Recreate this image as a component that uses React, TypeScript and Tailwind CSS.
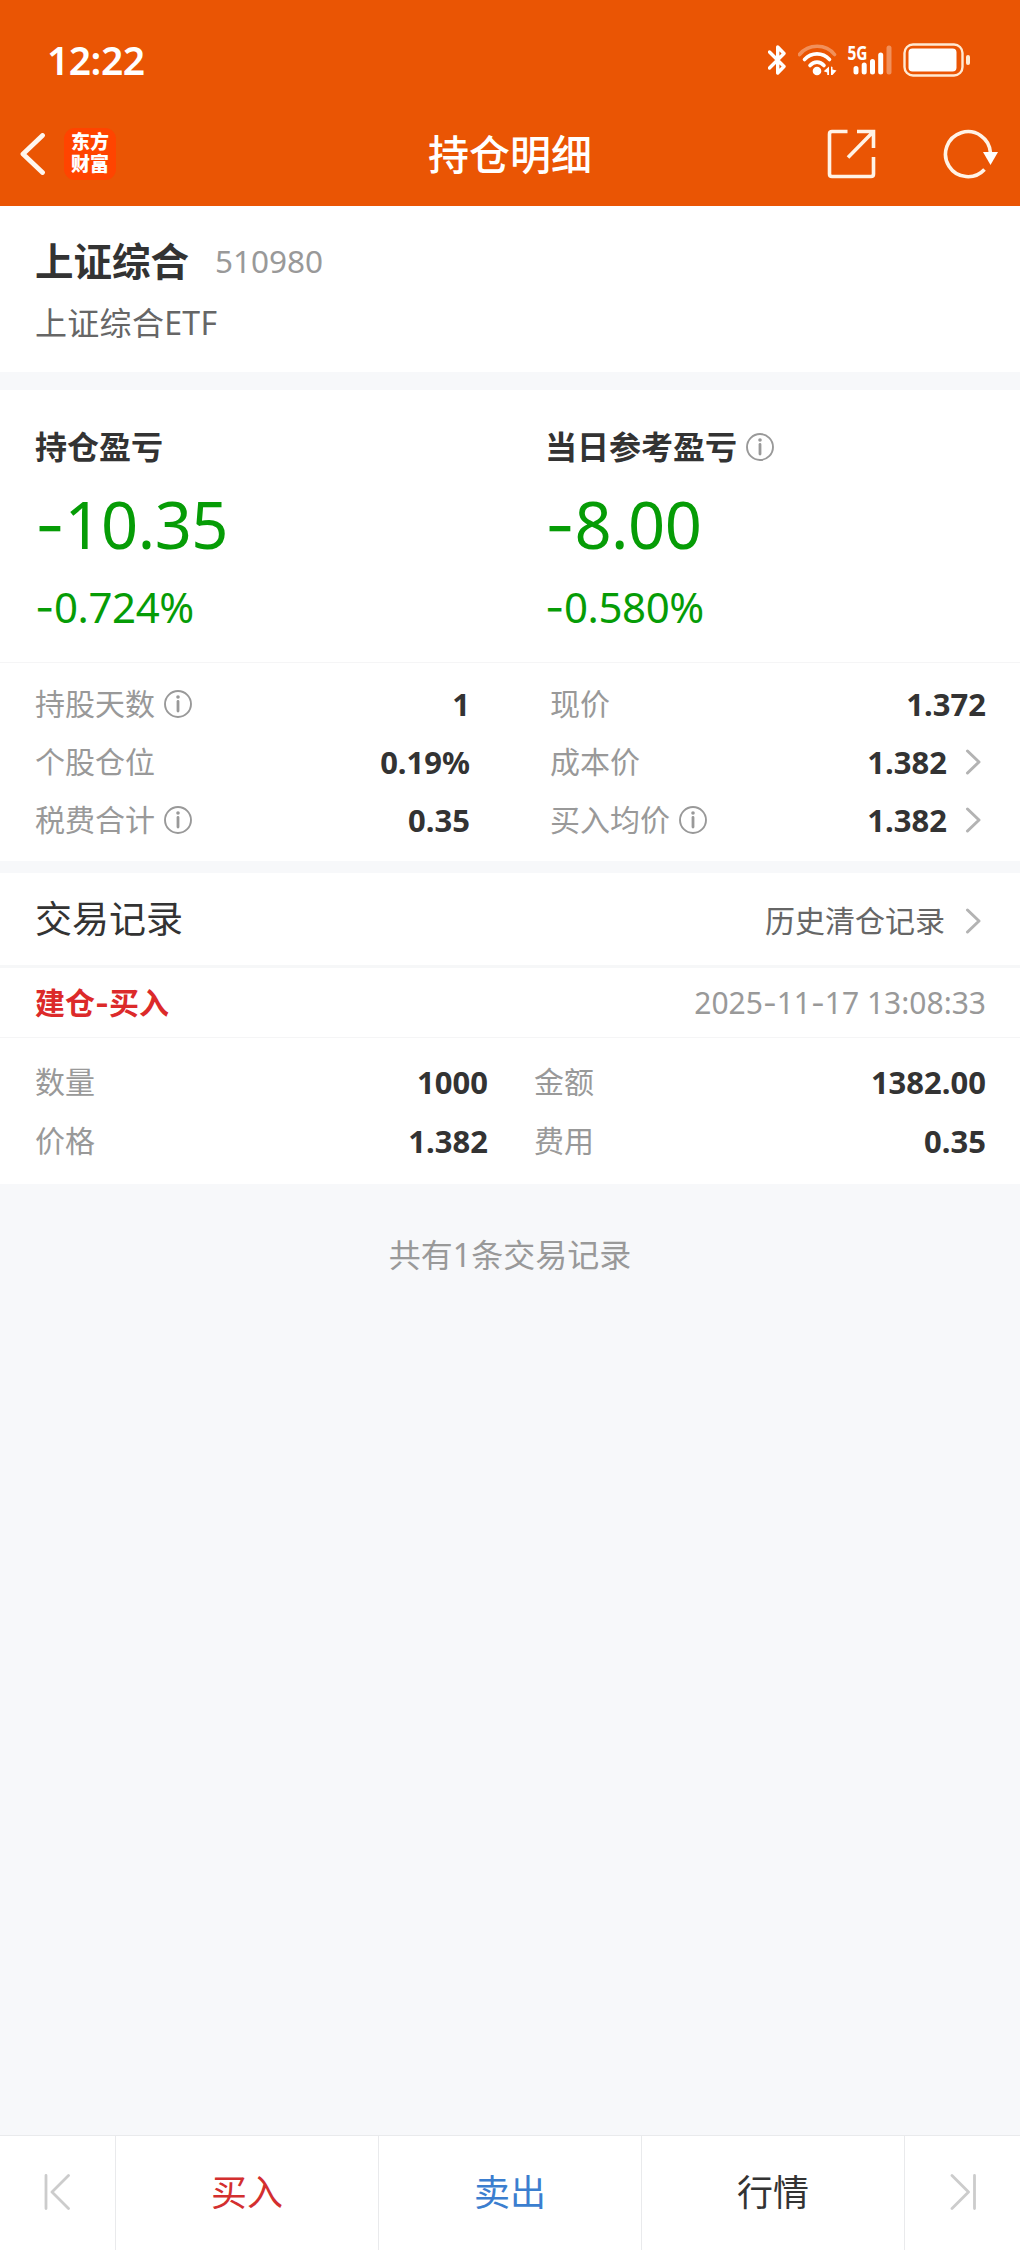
import React from 'react';

interface MetricProps {
  label: string;
  value: string;
  info?: boolean;
  arrow?: boolean;
}

function InfoIcon() {
  return (
    <svg className="h-7 w-7 shrink-0" viewBox="0 0 28 28" fill="none" stroke="#999999">
      <circle cx="14" cy="14" r="13" strokeWidth="1.9" />
      <path d="M14 11.5v9.5" strokeWidth="2.8" strokeLinecap="round" />
      <circle cx="14" cy="7" r="1.8" fill="#999999" stroke="none" />
    </svg>
  );
}

function ChevronIcon() {
  return (
    <svg className="h-[26px] w-4 shrink-0" viewBox="0 0 16 26" fill="none" stroke="#b3b3b3" strokeWidth="3" strokeLinecap="round" strokeLinejoin="round">
      <path d="M2.5 2 14 13 2.5 24" />
    </svg>
  );
}

function Dash() {
  return <span className="font-['Inter']">-</span>;
}

function StatusBar() {
  return (
    <div className="flex h-[103px] items-center justify-between pt-4 pr-[50px] pl-[47px]">
      <span className="text-[39px] leading-[40px] font-semibold tracking-[-0.5px]">12:22</span>
      <div className="flex items-center">
        <svg className="h-8 w-5" viewBox="0 0 20 32" fill="none" stroke="currentColor" strokeWidth="3.4" strokeLinecap="round" strokeLinejoin="round">
          <path d="M1.5 8 16 22.5 9.7 29V3L16 9.5 1.5 24" />
        </svg>
        <svg className="ml-[10px] h-8 w-10" viewBox="0 0 40 32" fill="none" stroke="currentColor" strokeWidth="3.6" strokeLinecap="round">
          <path d="M1.5 10.500C10.500 -.500 28 -.500 36.500 10.500" opacity=".35" />
          <path d="M6.500 15.500C13.500 8 24.500 8 31.500 15.500" />
          <path d="M12 21.500C16 17 22 17 26 21.500" />
          <circle cx="19" cy="27" r="4.300" fill="currentColor" stroke="none" />
          <path d="M31 22.500v8.500h-1.800v-2.500l-3.500-1.200zM33 22.500l1.500.500v2.500l4 1L34.500 31H33z" fill="currentColor" stroke="none" />
        </svg>
        <svg className="ml-[9px] h-8 w-[46px] overflow-visible" viewBox="0 0 46 32" fill="none" stroke="currentColor" strokeWidth="5" strokeLinecap="round">
          <text x="0.5" y="16" fontSize="19" fontWeight="700" fill="currentColor" stroke="none" textLength="20" lengthAdjust="spacingAndGlyphs">5G</text>
          <path d="M9 24.500v3.500M17.200 21v7M25.500 17.500v10.500M33.700 11v17" />
          <path d="M42 4v24" opacity=".35" />
        </svg>
        <svg className="ml-[10px] h-[34px] w-[67px]" viewBox="0 0 67 34" fill="none">
          <rect x="1.5" y="1.5" width="58" height="31" rx="8.5" stroke="#ffe9d2" strokeWidth="2.4" />
          <rect x="5.5" y="5.5" width="48" height="23" rx="4" fill="#ffffff" />
          <rect x="63" y="12" width="4" height="10" rx="2" fill="#ffe9d2" />
        </svg>
      </div>
    </div>
  );
}

function Header() {
  return (
    <header className="h-[206px] bg-[#ea5504] text-white">
      <StatusBar />
      <div className="flex h-[101px] items-center justify-between pr-[21px] pl-[19px]">
        <div className="flex w-[220px] items-center">
          <svg className="h-[42px] w-[27px]" viewBox="0 0 27 42" fill="none" stroke="#fff6ee" strokeWidth="4.8" strokeLinecap="round" strokeLinejoin="round">
            <path d="M23.5 2.5 4 21 23.5 39.5" />
          </svg>
          <div className="ml-[18px] flex h-[52px] w-[52px] flex-col items-center justify-center rounded-[11px] bg-[#ff4400] pb-px text-[19px] leading-[22px] font-black">
            <span>东方</span>
            <span>财富</span>
          </div>
        </div>
        <h1 className="pl-[2px] text-[41px] leading-[50px] font-medium">持仓明细</h1>
        <div className="flex w-[220px] items-center justify-end">
          <svg className="h-[50px] w-[50px]" viewBox="0 0 50 50" fill="none" stroke="#fff3e6" strokeWidth="3.6">
            <path d="M20.5 2.5H5Q2.5 2.5 2.5 5v40q0 2.5 2.5 2.5h39q2.5 0 2.5-2.5V28" />
            <path d="M30 2.5h16.5V19M46.5 2.5 21 28.5" />
          </svg>
          <svg className="ml-[66px] h-14 w-14" viewBox="0 0 56 56" fill="none" stroke="#fff3e6" strokeWidth="3.6">
            <path d="M41.5 43.5A22.500 22.500 0 1 1 47.500 27" />
            <path d="M40 26h15l-7.5 13z" fill="#ffffff" stroke="none" />
          </svg>
        </div>
      </div>
    </header>
  );
}

function Metric({ label, value, info, arrow }: MetricProps) {
  return (
    <div className="flex h-[58px] items-center justify-between">
      <div className="flex items-center gap-[9px] text-[#999999]">
        <span>{label}</span>
        {info && <InfoIcon />}
      </div>
      <div className="flex items-center gap-[18px]">
        <span className="text-[31px] font-bold">{value}</span>
        {arrow && (
          <span className="flex pr-[5px]">
            <ChevronIcon />
          </span>
        )}
      </div>
    </div>
  );
}

function ProfitCard({ title, amount, percent, info }: { title: string; amount: string; percent: string; info?: boolean }) {
  return (
    <div className="pl-[35px] text-[#069c06]">
      <div className="flex h-10 items-center gap-[9px]">
        <span className="text-[32px] font-bold text-[#333333]">{title}</span>
        {info && <InfoIcon />}
      </div>
      <p className="mt-[22px] text-[65px] leading-[70px] tracking-[-0.5px]">
        <Dash />
        {amount}
      </p>
      <p className="mt-[21px] text-[42px] leading-[50px] tracking-[-0.4px]">
        <Dash />
        {percent}
      </p>
    </div>
  );
}

function BottomBar() {
  return (
    <nav className="flex h-[115px] border-t border-[#e9eaec] bg-white text-[36px]">
      <button className="flex w-[116px] items-center justify-center border-r border-[#e9eaec]">
        <svg className="h-[38px] w-[28px]" viewBox="0 0 28 38" fill="none" stroke="#cccccc" strokeWidth="2.8" strokeLinecap="round" strokeLinejoin="round">
          <path d="M2 1.5v33M24.500 1.500 8 18l16.500 16.500" />
        </svg>
      </button>
      <button className="w-[263px] border-r border-[#e9eaec] text-[#d32f2f]">买入</button>
      <button className="w-[263px] border-r border-[#e9eaec] text-[#3b7ecf]">卖出</button>
      <button className="w-[263px] border-r border-[#e9eaec]">行情</button>
      <button className="flex w-[115px] items-center justify-center">
        <svg className="h-[38px] w-[28px]" viewBox="0 0 28 38" fill="none" stroke="#cccccc" strokeWidth="2.8" strokeLinecap="round" strokeLinejoin="round">
          <path d="M25.500 1.500v33M3 1.500 19.500 18 3 34.500" />
        </svg>
      </button>
    </nav>
  );
}

export default function App() {
  return (
    <div className="flex h-[2250px] w-[1020px] flex-col bg-[#f7f8fa] font-['Noto_Sans','Noto_Sans_CJK_SC',sans-serif] text-[30px] leading-[40px] text-[#333333]">
      <Header />

      <section className="h-[166px] bg-white px-[35px] pt-[34px]">
        <div className="flex h-[42px] items-center">
          <h2 className="text-[38.5px] font-bold">上证综合</h2>
          <span className="ml-[26px] text-[31.5px] text-[#999999]">510980</span>
        </div>
        <p className="mt-[21px] text-[32px] tracking-[0.3px] text-[#666666]">上证综合ETF</p>
      </section>

      <section className="mt-[18px] bg-white">
        <div className="grid h-[273px] grid-cols-2 border-b border-[#f5f5f6] pt-[37px]">
          <ProfitCard title="持仓盈亏" amount="10.35" percent="0.724%" />
          <ProfitCard title="当日参考盈亏" amount="8.00" percent="0.580%" info />
        </div>
        <div className="flex h-[198px] gap-[80px] pt-3 pr-[34px] pl-[35px]">
          <div className="w-[435px]">
            <Metric label="持股天数" value="1" info />
            <Metric label="个股仓位" value="0.19%" />
            <Metric label="税费合计" value="0.35" info />
          </div>
          <div className="flex-1">
            <Metric label="现价" value="1.372" />
            <Metric label="成本价" value="1.382" arrow />
            <Metric label="买入均价" value="1.382" info arrow />
          </div>
        </div>
      </section>

      <section className="mt-3 bg-white">
        <div className="flex h-[95px] items-center justify-between border-b-[3px] border-[#f6f7f8] pr-[34px] pl-[35px]">
          <h3 className="text-[37px]">交易记录</h3>
          <div className="flex items-center gap-[20px] pt-[3px] pr-[5px] text-[#666666]">
            <span>历史清仓记录</span>
            <ChevronIcon />
          </div>
        </div>
        <div className="flex h-[70px] items-center justify-between border-b border-[#f5f5f6] pr-[34px] pl-[35px]">
          <span className="font-bold text-[#dc2a2a]">
            建仓
            <Dash />
            买入
          </span>
          <span className="text-[#999999]">
            2025
            <Dash />
            11
            <Dash />
            17 13:08:33
          </span>
        </div>
        <div className="flex h-[146px] gap-[46px] pt-[15px] pr-[34px] pl-[35px]">
          <div className="flex w-[453px] flex-col gap-px">
            <Metric label="数量" value="1000" />
            <Metric label="价格" value="1.382" />
          </div>
          <div className="flex flex-1 flex-col gap-px">
            <Metric label="金额" value="1382.00" />
            <Metric label="费用" value="0.35" />
          </div>
        </div>
      </section>

      <p className="mt-[51px] text-center text-[32px] text-[#999999]">共有1条交易记录</p>

      <div className="flex-1" />
      <BottomBar />
    </div>
  );
}
